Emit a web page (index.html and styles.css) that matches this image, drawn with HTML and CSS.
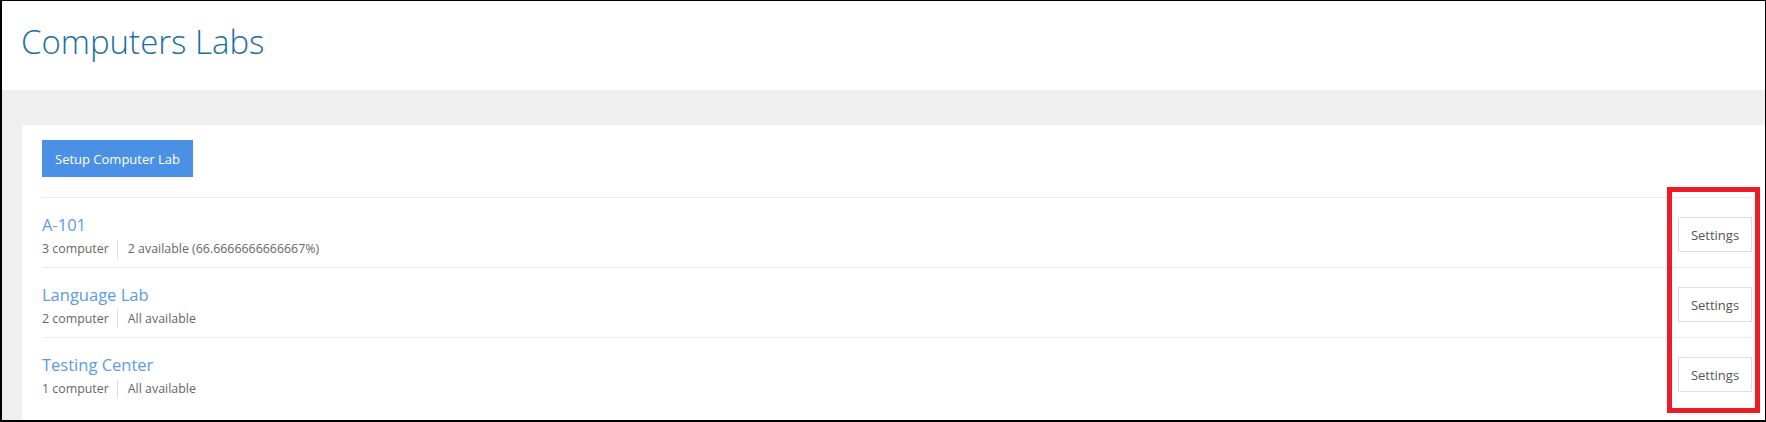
FILE: index.html
```html
<!DOCTYPE html>
<html>
<head>
<meta charset="utf-8">
<link rel="stylesheet" href="styles.css">
</head>
<body>
<div class="frame">
  <header class="page-header">
    <h1 class="title">Computers Labs</h1>
  </header>
  <main class="content">
    <section class="card">
      <button class="btn-primary">Setup Computer Lab</button>
      <ul class="labs">
        <li class="lab">
          <div class="lab-info">
            <a class="lab-name">A-101</a>
            <div class="lab-meta"><span>3 computer</span><span class="sep">2 available (66.6666666666667%)</span></div>
          </div>
          <button class="btn-settings">Settings</button>
        </li>
        <li class="lab">
          <div class="lab-info">
            <a class="lab-name">Language Lab</a>
            <div class="lab-meta"><span>2 computer</span><span class="sep">All available</span></div>
          </div>
          <button class="btn-settings">Settings</button>
        </li>
        <li class="lab">
          <div class="lab-info">
            <a class="lab-name">Testing Center</a>
            <div class="lab-meta"><span>1 computer</span><span class="sep">All available</span></div>
          </div>
          <button class="btn-settings">Settings</button>
        </li>
      </ul>
    </section>
  </main>
  <div class="highlight"></div>
</div>
</body>
</html>
```

FILE: styles.css
```css
* { box-sizing: border-box; }
html, body { margin: 0; padding: 0; }
body {
  font-family: "Open Sans", "Liberation Sans", sans-serif;
  background: #fff;
}
.frame {
  position: relative;
  width: 1766px;
  height: 422px;
  overflow: hidden;
  border-left: 2px solid #000;
  border-top: 1px solid #000;
  border-right: 1px solid #000;
  border-bottom: 2px solid #000;
  display: flex;
  flex-direction: column;
}
.page-header {
  flex: 0 0 89px;
  height: 89px;
  padding: 21px 0 0 19px;
  background: #fff;
}
.title {
  margin: 0;
  font-size: 33px;
  line-height: 40px;
  font-weight: 300;
  color: #1c6ea4;
}
.content {
  flex: 1 0 auto;
  background: #efefef;
  padding: 35px 0 0 20px;
}
.card {
  background: #fff;
  height: 400px;
  padding: 15px 13px 0 20px;
}
.btn-primary {
  display: block;
  height: 37px;
  padding: 0 13px;
  border: 0;
  background: #4a91e6;
  color: #fff;
  font-family: inherit;
  font-size: 13px;
  margin: 0 0 20px 0;
}
.labs {
  list-style: none;
  margin: 0;
  padding: 0;
}
.lab {
  display: flex;
  align-items: center;
  justify-content: space-between;
  border-top: 1px solid #ececec;
  padding: 15px 0 9px 0;
}
.lab-name {
  display: block;
  font-size: 16.5px;
  line-height: 24px;
  color: #5b9be6;
}
.lab-meta {
  margin-top: 3px;
  font-size: 12.4px;
  line-height: 18px;
  color: #666;
  display: flex;
}
.lab-meta .sep {
  margin-left: 8px;
  padding-left: 10px;
  border-left: 1px solid #ddd;
}
.btn-settings {
  flex: 0 0 74px;
  width: 74px;
  height: 35px;
  margin-top: -2px;
  border: 1px solid #ddd;
  background: #fff;
  color: #555;
  font-family: inherit;
  font-size: 13px;
  padding: 0;
}
.highlight {
  position: absolute;
  left: 1665px;
  top: 186px;
  width: 93px;
  height: 226px;
  border: 5px solid #ed1c24;
}
```
